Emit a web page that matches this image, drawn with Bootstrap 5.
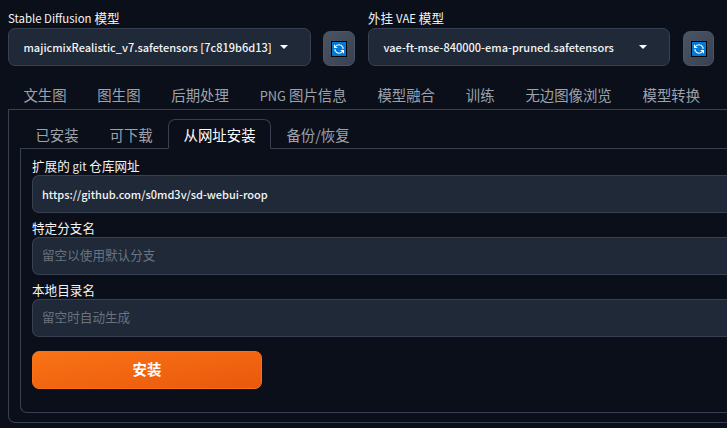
<!DOCTYPE html>
<html lang="zh-CN">

<head>
    <meta charset="UTF-8">
    <title>Stable Diffusion</title>
    <meta name="viewport" content="width=device-width, initial-scale=1">
    <!-- Bootstrap 5 CSS -->
    <link href="https://cdn.jsdelivr.net/npm/bootstrap@5.3.3/dist/css/bootstrap.min.css" rel="stylesheet">
    <style>
        body {
            background: #0b0f19;
            color: #f3f4f6;
            font-family: "Noto Sans CJK SC", sans-serif;
            font-size: 12.6px;
            line-height: 18px;
            height: 428px;
            overflow: hidden;
            white-space: nowrap;
        }

        .latin {
            font-size: 11.4px;
            line-height: 1;
        }

        .top-bar {
            padding: 9px 0 0 8px;
            height: 66px;
        }

        .model-field {
            width: 303px;
        }

        .vae-field {
            width: 302px;
            margin-left: 13px;
        }

        .model-field .form-label,
        .vae-field .form-label,
        .ext-form .form-label {
            display: block;
            height: 18px;
            margin: 0;
        }

        .model-select {
            height: 38px;
            margin-top: 1px;
            padding: 0 22px 0 14.5px;
            background: #1f2937;
            border: 1px solid #374151;
            border-radius: 7px;
        }

        .model-select .latin {
            font-size: 11px;
            font-weight: 500;
        }

        .tool-btn {
            width: 32px;
            height: 35px;
            margin-left: 12px;
            padding: 0;
            border: 1px solid #4b5563;
            border-radius: 7px;
            background: linear-gradient(to bottom right, #4b5563, #374151);
        }

        .vae-field + .tool-btn {
            width: 31px;
            margin-left: 13px;
        }

        .nav-tabs {
            --bs-nav-tabs-border-width: 1px;
            --bs-nav-tabs-border-color: #374151;
            --bs-nav-tabs-border-radius: 7px;
            --bs-nav-tabs-link-hover-border-color: transparent;
            --bs-nav-tabs-link-active-color: #fff;
            --bs-nav-tabs-link-active-bg: #0b0f19;
            --bs-nav-tabs-link-active-border-color: #374151 #374151 #0b0f19;
            --bs-nav-link-color: #9ca3af;
            font-size: 14.4px;
        }

        .nav-tabs .nav-link {
            height: 30px;
            padding: 3.5px 14.45px 3px;
            line-height: 21px;
        }

        .nav-tabs .latin {
            font-size: 12.8px;
        }

        .main-tabs {
            margin: 14px 0 0 8px;
        }

        .main-tabs .nav-link {
            padding: 3px 14.4px 4px;
        }

        .main-panel {
            height: 313px;
            margin-left: 8px;
            padding: 9px 0 0 11px;
            border: solid #374151;
            border-width: 0 0 1px 1px;
            border-bottom-left-radius: 7px;
        }

        .sub-panel {
            height: 264px;
            padding: 8px 0 0 11px;
            border: solid #374151;
            border-width: 0 0 1px 1px;
            border-bottom-left-radius: 7px;
        }

        .ext-form .form-control {
            height: 38px;
            padding: 0 9px 3px;
            background: #1f2937;
            border: 1px solid #374151;
            border-right: 0;
            border-radius: 7px 0 0 7px;
            color: #f3f4f6;
            font-size: 12.6px;
        }

        .ext-form .form-control.latin {
            padding-bottom: 0;
            font-size: 11px;
            font-weight: 500;
        }

        .ext-form .form-control::placeholder {
            color: #6b7280;
        }

        .ext-form .field-row {
            height: 62px;
        }

        .install-btn {
            width: 230px;
            height: 38px;
            margin-top: 8px;
            padding: 0 0 3px;
            border: 1px solid #f97316;
            border-radius: 7px;
            background: linear-gradient(to bottom right, #f97316, #ea580c);
            color: #fff;
            font-size: 14.4px;
            font-weight: 700;
        }
    </style>
</head>

<body>
    <!-- Model selection -->
    <div class="top-bar d-flex">
        <div class="model-field">
            <label class="form-label"><span class="latin">Stable Diffusion</span> 模型</label>
            <div class="model-select d-flex align-items-center justify-content-between">
                <span class="latin">majicmixRealistic_v7.safetensors [7c819b6d13]</span>
                <svg width="8" height="4" viewBox="0 0 8 4"><path d="M0 0h8L4 4z" fill="#fff"/></svg>
            </div>
        </div>
        <button class="tool-btn btn d-flex align-items-center justify-content-center align-self-end" aria-label="refresh">
            <svg width="16" height="16" viewBox="0 0 16 16"><path d="M0 0h16v16H0z" fill="#000"/><path d="M1 1h14v14H1z" fill="#0078d7"/><path d="M4 6.2C5.5 3 10.3 3 12 6.4V8M12 9.8C10.5 13 5.7 13 4 9.6V8M3.5 3.7v2.8h2.8M12.5 12.3V9.5H9.7" fill="none" stroke="#fff" stroke-width="1.1"/></svg>
        </button>
        <div class="vae-field">
            <label class="form-label">外挂 <span class="latin">VAE</span> 模型</label>
            <div class="model-select d-flex align-items-center justify-content-between">
                <span class="latin">vae-ft-mse-840000-ema-pruned.safetensors</span>
                <svg width="8" height="4" viewBox="0 0 8 4"><path d="M0 0h8L4 4z" fill="#fff"/></svg>
            </div>
        </div>
        <button class="tool-btn btn d-flex align-items-center justify-content-center align-self-end" aria-label="refresh">
            <svg width="16" height="16" viewBox="0 0 16 16"><path d="M0 0h16v16H0z" fill="#000"/><path d="M1 1h14v14H1z" fill="#0078d7"/><path d="M4 6.2C5.5 3 10.3 3 12 6.4V8M12 9.8C10.5 13 5.7 13 4 9.6V8M3.5 3.7v2.8h2.8M12.5 12.3V9.5H9.7" fill="none" stroke="#fff" stroke-width="1.1"/></svg>
        </button>
    </div>

    <!-- Main tabs -->
    <ul class="nav nav-tabs main-tabs flex-nowrap">
        <li class="nav-item"><a class="nav-link">文生图</a></li>
        <li class="nav-item"><a class="nav-link">图生图</a></li>
        <li class="nav-item"><a class="nav-link">后期处理</a></li>
        <li class="nav-item"><a class="nav-link"><span class="latin">PNG</span> 图片信息</a></li>
        <li class="nav-item"><a class="nav-link">模型融合</a></li>
        <li class="nav-item"><a class="nav-link">训练</a></li>
        <li class="nav-item"><a class="nav-link">无边图像浏览</a></li>
        <li class="nav-item"><a class="nav-link">模型转换</a></li>
    </ul>
    <div class="main-panel">
        <!-- Extension tabs -->
        <ul class="nav nav-tabs flex-nowrap">
            <li class="nav-item"><a class="nav-link">已安装</a></li>
            <li class="nav-item"><a class="nav-link">可下载</a></li>
            <li class="nav-item"><a class="nav-link active">从网址安装</a></li>
            <li class="nav-item"><a class="nav-link">备份/恢复</a></li>
        </ul>
        <div class="sub-panel">
            <form class="ext-form">
                <div class="field-row">
                    <label class="form-label">扩展的 <span class="latin">git</span> 仓库网址</label>
                    <input type="text" class="form-control latin" value="https://github.com/s0md3v/sd-webui-roop">
                </div>
                <div class="field-row">
                    <label class="form-label">特定分支名</label>
                    <input type="text" class="form-control" placeholder="留空以使用默认分支">
                </div>
                <div class="field-row">
                    <label class="form-label">本地目录名</label>
                    <input type="text" class="form-control" placeholder="留空时自动生成">
                </div>
                <button type="button" class="install-btn btn">安装</button>
            </form>
        </div>
    </div>

    <!-- Bootstrap JS -->
    <script src="https://cdn.jsdelivr.net/npm/bootstrap@5.3.3/dist/js/bootstrap.bundle.min.js"></script>
</body>

</html>
